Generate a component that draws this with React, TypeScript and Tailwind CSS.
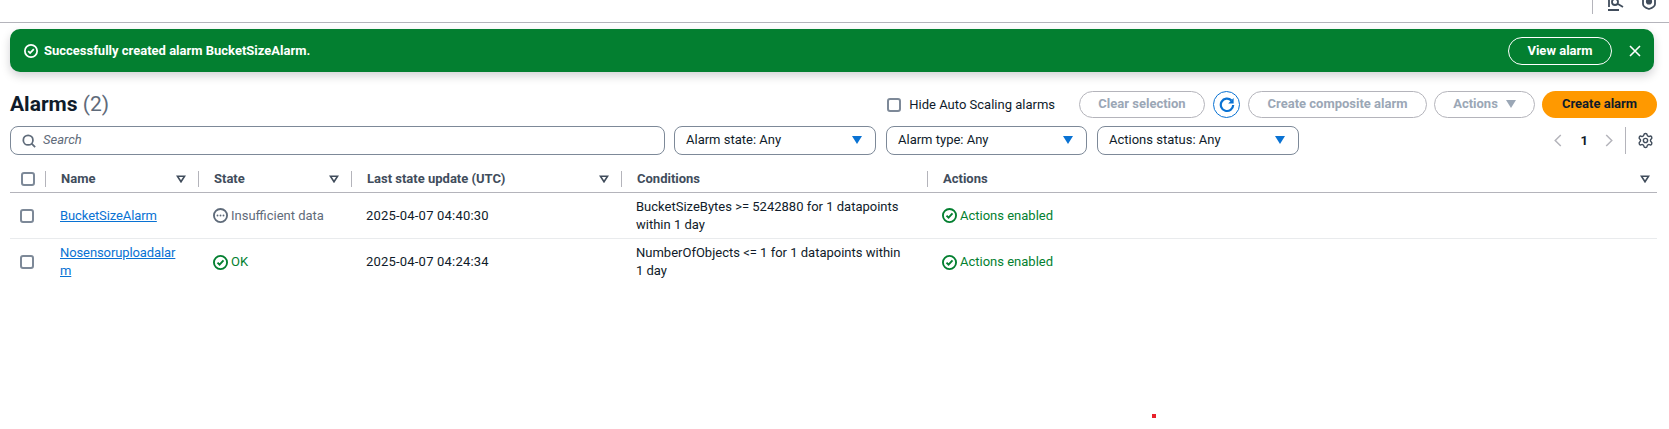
import { Settings } from "lucide-react";

const FONT = "font-['Roboto',sans-serif]";

function CheckCircle({ className }: { className: string }) {
  return (
    <svg viewBox="0 0 16 16" fill="none" stroke="currentColor" strokeWidth="2" className={className} aria-hidden>
      <circle cx="8" cy="8" r="7" />
      <path d="M4.8 8.2 7 10.4l4.2-4.6" />
    </svg>
  );
}

function DotsCircle() {
  return (
    <svg viewBox="0 0 16 16" fill="none" className="size-[15px] shrink-0 text-[#5f6b7a]" aria-hidden>
      <circle cx="8" cy="8" r="7" stroke="currentColor" strokeWidth="2" />
      <circle cx="4.8" cy="8" r="1" fill="currentColor" />
      <circle cx="8" cy="8" r="1" fill="currentColor" />
      <circle cx="11.2" cy="8" r="1" fill="currentColor" />
    </svg>
  );
}

function Checkbox() {
  return <span className="block size-[14px] shrink-0 rounded-[3px] border-2 border-[#7d8998] bg-white" />;
}

function BlueCaret() {
  return (
    <svg viewBox="0 0 10 8" className="h-[8px] w-[10px] text-[#0972d3]" fill="currentColor" aria-hidden>
      <path d="M0 0h10L5 8z" />
    </svg>
  );
}

function SortCaret() {
  return (
    <svg viewBox="0 0 12 10" fill="none" stroke="#414d5c" strokeWidth="2" className="h-[8px] w-[10px]" aria-hidden>
      <path d="M1.5 1.5h9L6 8.5z" />
    </svg>
  );
}

function Filter({ label, width }: { label: string; width: string }) {
  return (
    <button type="button" className={`flex h-[29px] items-center justify-between rounded-[8px] border border-[#7d8998] pb-[1px] pl-[11px] pr-[13px] text-[13px] text-[#0f1b2a] ${width}`}>
      {label}
      <BlueCaret />
    </button>
  );
}

function GhostButton({ label, width, caret }: { label: string; width: string; caret?: boolean }) {
  return (
    <button type="button" className={`flex h-[27px] items-center justify-center gap-[8px] rounded-full border border-[#b4b4bb] pb-[1px] text-[13px] font-bold text-[#9ba7b6] ${width}`}>
      {label}
      {caret && (
        <svg viewBox="0 0 10 8" className="h-[8px] w-[10px]" fill="currentColor" aria-hidden>
          <path d="M0 0h10L5 8z" />
        </svg>
      )}
    </button>
  );
}

function HeaderCell({ label, sort, last }: { label: string; sort?: boolean; last?: boolean }) {
  return (
    <div className={`flex h-[16px] w-full items-center justify-between border-l border-[#b4b4bb] pl-[15px] ${last ? "pr-[7px]" : "pr-[12px]"}`}>
      <span>{label}</span>
      {sort && <SortCaret />}
    </div>
  );
}

function EnabledCell() {
  return (
    <div className="flex items-center gap-[3px] pl-[15px] text-[#037f30]">
      <CheckCircle className="size-[15px] shrink-0" />
      Actions enabled
    </div>
  );
}

const rowGrid = "grid grid-cols-[35px_153px_153px_270px_306px_1fr] items-center text-[13px] leading-[18px]";

export default function App() {
  return (
    <div className={`relative h-[429px] w-[1669px] overflow-hidden bg-white ${FONT}`}>
      <div className="flex h-[23px] items-start justify-end overflow-hidden border-b border-[#b4b4bb] pr-[13px]">
        <div className="h-[14px] border-l border-[#b4b4bb]" />
        <svg viewBox="0 0 18 16" fill="none" stroke="#414d5c" strokeWidth="1.8" className="ml-[14px] h-[16px] w-[18px] -translate-y-[5px]" aria-hidden>
          <path d="M1 15h11M2 2v10" />
          <circle cx="8" cy="7" r="3" />
          <path d="m11 9 5 3M14 4l2-1" />
        </svg>
        <svg viewBox="0 0 14 16" fill="none" stroke="#414d5c" strokeWidth="1.8" className="ml-[17px] h-[16px] w-[14px] -translate-y-[6px]" aria-hidden>
          <path d="M1 2v8c0 2 3 4 6 5 3-1 6-3 6-5V2" />
          <circle cx="7" cy="7.5" r="2.2" fill="#414d5c" />
        </svg>
      </div>

      <div className="pl-[10px] pr-[12px]">
        <div className="mr-[3px] mt-[6px] flex h-[43px] items-center rounded-[10px] bg-[#037f30] pl-[14px] pr-[13px] text-white shadow-[0_4px_10px_rgba(0,7,22,0.18)]">
          <CheckCircle className="size-[14px] shrink-0" />
          <span className="ml-[6px] text-[13px] font-bold">Successfully created alarm BucketSizeAlarm.</span>
          <button type="button" className="ml-auto h-[28px] w-[104px] rounded-full border border-white text-[13px] font-bold">
            View alarm
          </button>
          <svg viewBox="0 0 12 12" fill="none" stroke="currentColor" strokeWidth="1.6" className="ml-[17px] size-[12px]" aria-hidden>
            <path d="m1 1 10 10M11 1 1 11" />
          </svg>
        </div>

        <div className="mt-[19px] flex h-[27px] items-center">
          <h1 className="text-[21px] font-bold text-[#0f1b2a]">
            Alarms <span className="font-normal text-[#5f6b7a]">(2)</span>
          </h1>
          <label className="ml-auto flex items-center gap-[8px] text-[13px] text-[#0f1b2a]">
            <Checkbox />
            Hide Auto Scaling alarms
          </label>
          <div className="ml-[24px]">
            <GhostButton label="Clear selection" width="w-[126px]" />
          </div>
          <button type="button" className="ml-[8px] flex h-[27px] w-[27px] items-center justify-center rounded-full border-[1.5px] border-[#0972d3]" aria-label="Refresh">
            <svg viewBox="0 0 16 16" fill="none" className="size-[16px]" aria-hidden>
              <path d="M12.4 3.4A6.2 6.2 0 1 0 14.2 8" stroke="#0972d3" strokeWidth="2.2" />
              <path d="M14.6 1v5.4H9.2z" fill="#0972d3" />
            </svg>
          </button>
          <div className="ml-[8px]">
            <GhostButton label="Create composite alarm" width="w-[179px]" />
          </div>
          <div className="ml-[7px]">
            <GhostButton label="Actions" width="w-[101px]" caret />
          </div>
          <button type="button" className="ml-[7px] h-[27px] w-[115px] rounded-full bg-[#ff9900] pb-[1px] text-[13px] font-bold text-[#0f1b2a]">
            Create alarm
          </button>
        </div>

        <div className="mt-[8px] flex items-center">
          <div className="flex h-[29px] w-[655px] items-center gap-[7px] rounded-[8px] border border-[#7d8998] pl-[11px]">
            <svg viewBox="0 0 16 16" fill="none" stroke="#5f6b7a" strokeWidth="2" className="size-[14px]" aria-hidden>
              <circle cx="7" cy="7" r="5.5" />
              <path d="m11 11 4 4" />
            </svg>
            <span className="pb-[1px] text-[13px] italic text-[#5f6b7a]">Search</span>
          </div>
          <div className="ml-[9px] flex gap-[10px]">
            <Filter label="Alarm state: Any" width="w-[202px]" />
            <Filter label="Alarm type: Any" width="w-[201px]" />
            <Filter label="Actions status: Any" width="w-[202px]" />
          </div>
          <div className="ml-auto flex h-[27px] items-center pr-[3px]">
            <svg viewBox="0 0 8 14" fill="none" stroke="#b4b4bb" strokeWidth="1.6" className="h-[13px] w-[8px]" aria-hidden>
              <path d="M7 1 1 7l6 6" />
            </svg>
            <span className="ml-[19px] mr-[17px] text-[13px] font-bold text-[#0f1b2a]">1</span>
            <svg viewBox="0 0 8 14" fill="none" stroke="#b4b4bb" strokeWidth="1.6" className="h-[13px] w-[8px]" aria-hidden>
              <path d="m1 1 6 6-6 6" />
            </svg>
            <div className="ml-[12px] h-[27px] border-l border-[#b4b4bb]" />
            <Settings className="ml-[11px] size-[17px] text-[#414d5c]" strokeWidth={2} />
          </div>
        </div>

        <div className="mt-[10px]">
          <div className={`${rowGrid} h-[28px] border-b border-[#b4b4bb] font-bold text-[#414d5c]`}>
            <div className="pl-[11px]">
              <Checkbox />
            </div>
            <HeaderCell label="Name" sort />
            <HeaderCell label="State" sort />
            <HeaderCell label="Last state update (UTC)" sort />
            <HeaderCell label="Conditions" />
            <HeaderCell label="Actions" sort last />
          </div>

          <div className={`${rowGrid} h-[46px] border-b border-[#e9ebed] text-[#0f1b2a]`}>
            <div className="pl-[10px]">
              <Checkbox />
            </div>
            <a className="ml-[15px] w-[118px] break-all tracking-[-0.1px] text-[#0972d3] underline">BucketSizeAlarm</a>
            <div className="flex items-center gap-[3px] pl-[15px] text-[#5f6b7a]">
              <DotsCircle />
              Insufficient data
            </div>
            <div className="pl-[15px] tracking-[0.2px]">2025-04-07 04:40:30</div>
            <div className="w-[285px] pl-[15px]">BucketSizeBytes &gt;= 5242880 for 1 datapoints within 1 day</div>
            <EnabledCell />
          </div>

          <div className={`${rowGrid} h-[46px] text-[#0f1b2a]`}>
            <div className="pl-[10px]">
              <Checkbox />
            </div>
            <a className="ml-[15px] w-[118px] break-all tracking-[-0.1px] text-[#0972d3] underline">Nosensoruploadalarm</a>
            <div className="flex items-center gap-[3px] pl-[15px] text-[#037f30]">
              <CheckCircle className="size-[15px] shrink-0" />
              OK
            </div>
            <div className="pl-[15px] tracking-[0.2px]">2025-04-07 04:24:34</div>
            <div className="w-[285px] pl-[15px]">NumberOfObjects &lt;= 1 for 1 datapoints within 1 day</div>
            <EnabledCell />
          </div>
        </div>
      </div>

      <span className="absolute left-[1152px] top-[414px] size-[4px] bg-[#e8202a]" />
    </div>
  );
}
